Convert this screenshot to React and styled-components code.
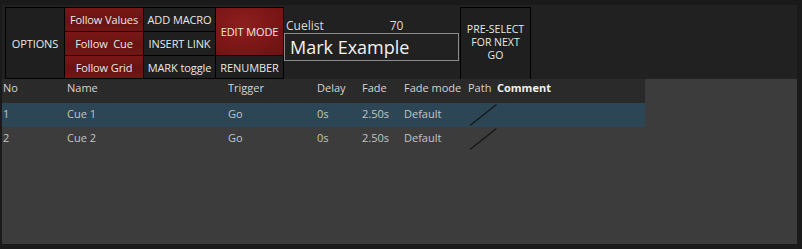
import React from 'react'
import styled, {createGlobalStyle, css} from 'styled-components'

const GlobalStyle = createGlobalStyle`
  html, body {
    margin: 0;
    padding: 0;
    background: #1a1a1a;
  }
  * {
    box-sizing: border-box;
  }
`

const Frame = styled.div`
  width: 802px;
  height: 249px;
  padding: 5px 5px 5px 2px;
  display: flex;
  flex-direction: column;
  font-family: "Open Sans", "Noto Sans", sans-serif;
`

const TopPanel = styled.div`
  height: 74px;
  background: #212121;
  display: flex;
  align-items: flex-start;
  padding: 2px 0 0 3px;
`

const ButtonGrid = styled.div`
  display: grid;
  grid-template-columns: 58px 78px 71px 67px;
  grid-template-rows: 23px 23px 22px;
  gap: 1px;
  padding: 1px;
  background: #000;
`

const redFill = css`
  background: linear-gradient(180deg, #7a1717 0%, #6a1212 55%, #741616 100%);
`

const Btn = styled.div`
  display: flex;
  align-items: center;
  justify-content: center;
  text-align: center;
  color: #e8e8e8;
  font-size: 11px;
  letter-spacing: -0.1px;
  white-space: pre;
  background: #1f1f1f;
  grid-column: ${p => p.$col};
  grid-row: ${p => p.$row};
  ${p => p.$red && redFill}
  ${p => p.$hot && css`
    background: radial-gradient(ellipse at 40% 35%, #8e1e1e 0%, #7a1616 60%, #6a1212 100%);
  `}
`

const CuelistBox = styled.div`
  width: 175px;
  display: flex;
  flex-direction: column;
  padding-top: 12px;
`

const CuelistHead = styled.div`
  display: flex;
  color: #dcdcdc;
  font-size: 12px;
  line-height: 14px;
  padding-left: 2px;
`

const CuelistNum = styled.span`
  margin-left: 66px;
`

const NameField = styled.div`
  height: 28px;
  border: 1px solid #8a8a8a;
  color: #f2f2f2;
  font-size: 18px;
  line-height: 26px;
  padding-left: 5px;
`

const PreSelect = styled.div`
  width: 71px;
  height: 73px;
  margin-left: 1px;
  border: 1px solid #000;
  background: #1f1f1f;
  color: #e8e8e8;
  font-size: 10.5px;
  line-height: 13px;
  text-align: center;
  display: flex;
  align-items: center;
  justify-content: center;
  padding-bottom: 2px;
`

const TableArea = styled.div`
  flex: 1;
  background: #3c3c3c;
`

const cols = '64px 161px 89px 45px 42px 64px 29px 149px'

const Row = styled.div`
  width: 643px;
  height: 24px;
  display: grid;
  grid-template-columns: ${cols};
  background: ${p => p.$bg || 'transparent'};
  font-size: 11px;
  line-height: 14px;
  color: ${p => p.$head ? '#d4d4d4' : '#c4c4c4'};
`

const Cell = styled.div`
  padding: ${p => p.$head ? '2px' : '4px'} 0 0 1px;
  font-weight: ${p => p.$bold ? 700 : 400};
  color: ${p => p.$bold ? '#f0f0f0' : 'inherit'};
  white-space: nowrap;
  position: relative;
`

const PathMark = styled.svg`
  position: absolute;
  left: 2px;
  top: 1px;
  overflow: visible;
`

const headers = ['No', 'Name', 'Trigger', 'Delay', 'Fade', 'Fade mode', 'Path']

const cues = [
  {no: '1', name: 'Cue 1', trigger: 'Go', delay: '0s', fade: '2.50s', mode: 'Default', selected: true},
  {no: '2', name: 'Cue 2', trigger: 'Go', delay: '0s', fade: '2.50s', mode: 'Default'},
]

const App = () => {
  return (
    <Frame>
      <GlobalStyle />
      <TopPanel>
        <ButtonGrid>
          <Btn $col="1" $row="1 / 4">OPTIONS</Btn>
          <Btn $col="2" $row="1" $red>Follow Values</Btn>
          <Btn $col="2" $row="2" $red>{'Follow  Cue'}</Btn>
          <Btn $col="2" $row="3" $red>Follow Grid</Btn>
          <Btn $col="3" $row="1">ADD MACRO</Btn>
          <Btn $col="3" $row="2">INSERT LINK</Btn>
          <Btn $col="3" $row="3">MARK toggle</Btn>
          <Btn $col="4" $row="1 / 3" $hot>EDIT MODE</Btn>
          <Btn $col="4" $row="3">RENUMBER</Btn>
        </ButtonGrid>
        <CuelistBox>
          <CuelistHead>
            Cuelist<CuelistNum>70</CuelistNum>
          </CuelistHead>
          <NameField>Mark Example</NameField>
        </CuelistBox>
        <PreSelect>PRE-SELECT<br />FOR NEXT<br />GO</PreSelect>
      </TopPanel>
      <TableArea>
        <Row $head $bg="#2a2a2a">
          {headers.map(h => <Cell $head key={h}>{h}</Cell>)}
          <Cell $head $bold>Comment</Cell>
        </Row>
        {cues.map(c => (
          <Row key={c.no} $bg={c.selected ? '#2d4655' : undefined}>
            <Cell>{c.no}</Cell>
            <Cell>{c.name}</Cell>
            <Cell>{c.trigger}</Cell>
            <Cell>{c.delay}</Cell>
            <Cell>{c.fade}</Cell>
            <Cell>{c.mode}</Cell>
            <Cell>
              <PathMark width="28" height="22" viewBox="0 0 28 22">
                <line x1="1" y1="21.5" x2="27.5" y2="0.5" stroke="#151515" strokeWidth="1.1" />
              </PathMark>
            </Cell>
            <Cell />
          </Row>
        ))}
      </TableArea>
    </Frame>
  )
}

export default App
